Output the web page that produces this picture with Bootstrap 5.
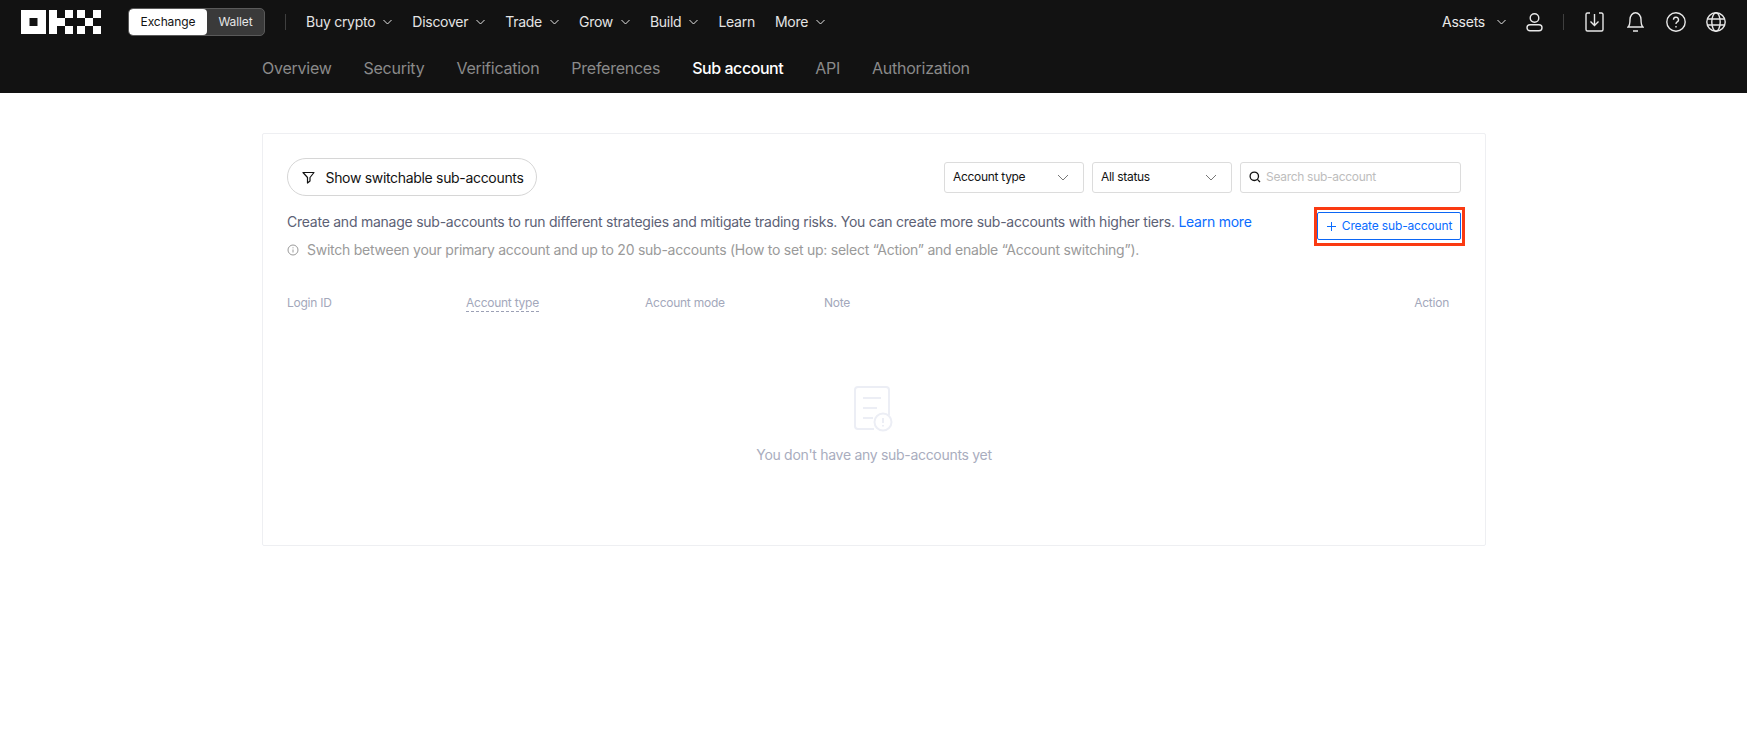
<!doctype html>
<html lang="en"><head><meta charset="utf-8"><title>Sub account</title>
<link href="https://cdn.jsdelivr.net/npm/bootstrap@5.3.0/dist/css/bootstrap.min.css" rel="stylesheet">
<style>
body{font-family:Inter,"Noto Sans",sans-serif;background:#fff;color:#121212;letter-spacing:-.27px}
.hdr{background:#121212;height:93px}
.toprow{height:43px;padding:0 21px}
.logo{width:80px;height:24px;display:block;flex:none}
.switcher{margin-left:27px;width:137px;height:28px;border:1px solid #5a5a5a;border-radius:5px;background:#3a3a3a;font-size:12px;overflow:hidden;letter-spacing:-.1px}
.switcher span{display:flex;align-items:center;justify-content:center}
.sw-on{background:#fff;color:#121212;width:78px;border-radius:4px}
.sw-off{color:#e6e6e6;flex:1}
.vsep{width:1px;height:16px;background:#3f3f3f}
.vsep-a{margin-left:20px}
.mainnav{margin-left:20px;gap:20px;font-size:14px;color:#e4e4e4}
.mainnav span{display:inline-flex;align-items:center;gap:8px}
.chev{width:9px;height:6px;fill:none;stroke:currentColor;stroke-width:1}
.rightnav{color:#e8e8e8;font-size:14px}
.icoslot{width:20px;display:flex;justify-content:center;margin-left:20.4px}
.icoslot-u{margin-left:18.5px}
.vsep-b{margin-left:19px}
.subnav{padding-left:262px;gap:32px;height:50px;font-size:16px;color:#8a8a8a;letter-spacing:-.25px}
.subnav .here{color:#fff;font-weight:500;letter-spacing:-.45px}
.panel{margin:40px 261px 0 262px;height:413px;border:1px solid #eeeff2;border-radius:2px;padding:24px 24px 0}
.pill{width:250px;height:38px;border:1px solid #d6d6d6;border-radius:19px;font-size:14px;background:#fff;padding:0 0 0 14px;gap:10.5px;color:#121212;white-space:nowrap;letter-spacing:-.32px}
.selbox{width:140px;height:31px;border:1px solid #dcdcdc;border-radius:3px;font-size:12px;padding:0 14px 0 8px;letter-spacing:-.3px}
.selbox .chev{width:12px;height:7px;color:#777}
.searchbox{width:221px;height:31px;border:1px solid #dcdcdc;border-radius:3px;font-size:12px;padding:0 8px;gap:5px;color:#bdbdbd;letter-spacing:-.3px}
.copyrow{margin-top:11px}
.intro{font-size:14px;color:#5c6175;line-height:28px;padding-top:1px;white-space:nowrap;letter-spacing:-.245px}
.intro a{color:#0a6cff;text-decoration:none}
.hint{color:#9a9a9a}
.redframe{border:3px solid #fa3a12;padding:2px 1px 3px 0;margin-right:-4px;flex:none}
.makebtn{width:144px;height:28px;border:1px solid #0b66f5;border-radius:2px;color:#0a6cff;background:#fff;font-size:12px;gap:5px;padding:0;white-space:nowrap;letter-spacing:-.15px}
.thead-row{font-size:12px;color:#a3a8bb;margin-top:28px;height:22px;letter-spacing:-.25px}
.thead-row>div{width:179px}
.thead-row>div.act{width:auto;margin-left:auto;margin-right:12px}
.dash{border-bottom:1px dashed #9ba0b5;display:inline-block;line-height:16px}
.nothing{margin-top:72px;color:#a9adbe;font-size:14px;gap:12px;letter-spacing:-.3px}
</style></head><body>
<header class="hdr">
 <div class="toprow d-flex align-items-center">
  <svg class="logo" viewBox="0 0 80 24" fill="#fff" aria-label="OKX logo"><path fill-rule="evenodd" d="M0 0h25v24H0zM8.500 8v8h8V8z"/><path d="M28 0h8v24h-8zM36 8h8v8h-8zM44 0h8v8h-8zM44 16h8v8h-8zM56 0h8v8h-8zM72 0h8v8h-8zM64 8h8v8h-8zM56 16h8v8h-8zM72 16h8v8h-8z"/></svg>
  <div class="switcher d-flex"><span class="sw-on">Exchange</span><span class="sw-off">Wallet</span></div>
  <div class="vsep vsep-a"></div>
  <nav class="mainnav d-flex align-items-center">
   <span>Buy crypto<svg class="chev" viewBox="0 0 9 6"><path d="M.5 1l4 4 4-4"/></svg></span>
   <span>Discover<svg class="chev" viewBox="0 0 9 6"><path d="M.5 1l4 4 4-4"/></svg></span>
   <span>Trade<svg class="chev" viewBox="0 0 9 6"><path d="M.5 1l4 4 4-4"/></svg></span>
   <span>Grow<svg class="chev" viewBox="0 0 9 6"><path d="M.5 1l4 4 4-4"/></svg></span>
   <span>Build<svg class="chev" viewBox="0 0 9 6"><path d="M.5 1l4 4 4-4"/></svg></span>
   <span>Learn</span>
   <span>More<svg class="chev" viewBox="0 0 9 6"><path d="M.5 1l4 4 4-4"/></svg></span>
  </nav>
  <div class="rightnav ms-auto d-flex align-items-center">
   <span class="d-inline-flex align-items-center gap-2">Assets<svg class="chev ms-1" viewBox="0 0 9 6"><path d="M.5 1l4 4 4-4"/></svg></span>
   <div class="icoslot icoslot-u"><svg width="17" height="20" viewBox="0 0 17 20" fill="none" stroke="currentColor" stroke-width="1.4"><circle cx="8.500" cy="6" r="4.300"/><rect x="1" y="12.800" width="15" height="6" rx="3"/></svg></div>
   <div class="vsep vsep-b"></div>
   <div class="icoslot"><svg width="19" height="20" viewBox="0 0 19 20" fill="none" stroke="currentColor" stroke-width="1.4"><path d="M5 1H2.500A1.500 1.500 0 0 0 1 2.500v15A1.500 1.500 0 0 0 2.500 19h14a1.500 1.500 0 0 0 1.500-1.500v-15A1.500 1.500 0 0 0 16.500 1H14M9.500 2v11M5.500 9.500l4 4 4-4"/></svg></div>
   <div class="icoslot"><svg width="17" height="21" viewBox="0 0 17 21" fill="none" stroke="currentColor" stroke-width="1.4"><path d="M1 16c2-1.500 2-4 2-7.500a5.500 6.800 0 0 1 11 0c0 3.500 0 6 2 7.500zM6 20h5"/></svg></div>
   <div class="icoslot"><svg width="20" height="20" viewBox="0 0 20 20" fill="none" stroke="currentColor" stroke-width="1.4"><circle cx="10" cy="10" r="9.200"/><path d="M7.500 7.800A2.500 2.500 0 1 1 11 10c-.7.400-1 .9-1 2M10 14v1.400"/></svg></div>
   <div class="icoslot"><svg width="20" height="20" viewBox="0 0 20 20" fill="none" stroke="currentColor" stroke-width="1.4"><circle cx="10" cy="10" r="9.200"/><ellipse cx="10" cy="10" rx="4.200" ry="9.200"/><path d="M1 7h18M1 13h18"/></svg></div>
  </div>
 </div>
 <nav class="subnav d-flex align-items-center">
  <span>Overview</span><span>Security</span><span>Verification</span><span>Preferences</span><span class="here">Sub account</span><span>API</span><span>Authorization</span>
 </nav>
</header>
<main class="panel">
 <div class="d-flex align-items-center">
  <button class="pill d-flex align-items-center" type="button"><svg width="13" height="13" viewBox="0 0 13 13" fill="none" stroke="#121212" stroke-width="1.2"><path d="M1 1.500h11L8 6.500v3.500L5.500 12V6.500z" stroke-linejoin="round"/></svg>Show switchable sub-accounts</button>
  <div class="ms-auto d-flex gap-2">
   <div class="selbox d-flex align-items-center justify-content-between">Account type<svg class="chev" viewBox="0 0 12 7"><path d="M1 1l5 5 5-5"/></svg></div>
   <div class="selbox d-flex align-items-center justify-content-between">All status<svg class="chev" viewBox="0 0 12 7"><path d="M1 1l5 5 5-5"/></svg></div>
   <div class="searchbox d-flex align-items-center"><svg width="12" height="12" viewBox="0 0 12 12" fill="none" stroke="#121212" stroke-width="1.300"><circle cx="5.300" cy="5.300" r="4.200"/><path d="M8.400 8.400L11 11"/></svg>Search sub-account</div>
  </div>
 </div>
 <div class="copyrow d-flex justify-content-between align-items-start">
  <div class="intro">
   <div>Create and manage sub-accounts to run different strategies and mitigate trading risks. You can create more sub-accounts with higher tiers. <a href="#">Learn more</a></div>
   <div class="hint d-flex align-items-center gap-2"><svg width="12" height="12" viewBox="0 0 12 12" fill="none" stroke="#9a9a9a"><circle cx="6" cy="6" r="5"/><path d="M6 5.500v3M6 3.300v1"/></svg>Switch between your primary account and up to 20 sub-accounts (How to set up: select “Action” and enable “Account switching”).</div>
  </div>
  <div class="redframe"><button class="makebtn d-flex align-items-center justify-content-center" type="button"><svg width="11" height="11" viewBox="0 0 11 11" stroke="#0a6cff" stroke-width="1"><path d="M5.500 1v9M1 5.500h9"/></svg>Create sub-account</button></div>
 </div>
 <div class="thead-row d-flex align-items-center">
  <div>Login ID</div><div><span class="dash">Account type</span></div><div>Account mode</div><div>Note</div><div class="act">Action</div>
 </div>
 <div class="nothing d-flex flex-column align-items-center">
  <svg width="40" height="46" viewBox="0 0 40 46" fill="none" stroke="#eceef5" stroke-width="2"><path d="M20 43H4a3 3 0 0 1-3-3V4a3 3 0 0 1 3-3h28a3 3 0 0 1 3 3v25M9 12h18M9 22h14M9 32h10"/><circle cx="29" cy="36" r="8.500"/><path d="M29 32v5M29 39v1.500"/></svg>
  <div>You don't have any sub-accounts yet</div>
 </div>
</main>
<script src="https://cdn.jsdelivr.net/npm/bootstrap@5.3.0/dist/js/bootstrap.bundle.min.js"></script>
</body></html>
